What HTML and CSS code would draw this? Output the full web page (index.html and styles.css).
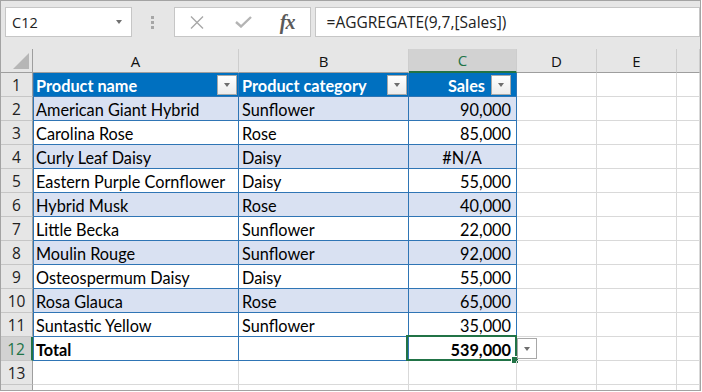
FILE: index.html
```html
<!DOCTYPE html>
<html>
<head>
    <title>AGGREGATE</title>
    <link rel="stylesheet" href="styles.css">
</head>
<body>
    <div class="window">
        <div class="formula-bar">
            <div class="name-box">
                <span>C12</span>
                <span class="caret"></span>
            </div>
            <div class="grip"><i></i><i></i><i></i></div>
            <div class="fx-buttons">
                <svg class="icon" width="14" height="13" viewBox="0 0 14 13">
                    <path d="M1 0.5 L13 12.5 M13 0.5 L1 12.5" stroke="#a8a8a8" stroke-width="1.4" fill="none"/>
                </svg>
                <svg class="icon" width="17" height="12" viewBox="0 0 17 12">
                    <path d="M1 6 L6 10.5 L16 1" stroke="#b4b4b4" stroke-width="2.4" fill="none"/>
                </svg>
                <span class="fx">fx</span>
            </div>
            <div class="formula-input">=AGGREGATE(9,7,[Sales])</div>
        </div>

        <div class="sheet">
            <!-- column headers -->
            <div class="hd corner"><span class="tri"></span></div>
            <div class="hd">A</div>
            <div class="hd">B</div>
            <div class="hd sel-col">C</div>
            <div class="hd">D</div>
            <div class="hd">E</div>
            <div class="hd"></div>

            <!-- row 1 -->
            <div class="rh">1</div>
            <div class="c t th first"><span>Product name</span><span class="filter"></span></div>
            <div class="c t th"><span>Product category</span><span class="filter"></span></div>
            <div class="c t th num"><span>Sales</span><span class="filter"></span></div>
            <div class="c"></div><div class="c"></div><div class="c"></div>

            <div class="rh">2</div>
            <div class="c t band first">American Giant Hybrid</div>
            <div class="c t band">Sunflower</div>
            <div class="c t band num">90,000</div>
            <div class="c"></div><div class="c"></div><div class="c"></div>

            <div class="rh">3</div>
            <div class="c t first">Carolina Rose</div>
            <div class="c t">Rose</div>
            <div class="c t num">85,000</div>
            <div class="c"></div><div class="c"></div><div class="c"></div>

            <div class="rh">4</div>
            <div class="c t band first">Curly Leaf Daisy</div>
            <div class="c t band">Daisy</div>
            <div class="c t band center">#N/A</div>
            <div class="c"></div><div class="c"></div><div class="c"></div>

            <div class="rh">5</div>
            <div class="c t first">Eastern Purple Cornflower</div>
            <div class="c t">Daisy</div>
            <div class="c t num">55,000</div>
            <div class="c"></div><div class="c"></div><div class="c"></div>

            <div class="rh">6</div>
            <div class="c t band first">Hybrid Musk</div>
            <div class="c t band">Rose</div>
            <div class="c t band num">40,000</div>
            <div class="c"></div><div class="c"></div><div class="c"></div>

            <div class="rh">7</div>
            <div class="c t first">Little Becka</div>
            <div class="c t">Sunflower</div>
            <div class="c t num">22,000</div>
            <div class="c"></div><div class="c"></div><div class="c"></div>

            <div class="rh">8</div>
            <div class="c t band first">Moulin Rouge</div>
            <div class="c t band">Sunflower</div>
            <div class="c t band num">92,000</div>
            <div class="c"></div><div class="c"></div><div class="c"></div>

            <div class="rh">9</div>
            <div class="c t first">Osteospermum Daisy</div>
            <div class="c t">Daisy</div>
            <div class="c t num">55,000</div>
            <div class="c"></div><div class="c"></div><div class="c"></div>

            <div class="rh">10</div>
            <div class="c t band first">Rosa Glauca</div>
            <div class="c t band">Rose</div>
            <div class="c t band num">65,000</div>
            <div class="c"></div><div class="c"></div><div class="c"></div>

            <div class="rh">11</div>
            <div class="c t first">Suntastic Yellow</div>
            <div class="c t">Sunflower</div>
            <div class="c t num">35,000</div>
            <div class="c"></div><div class="c"></div><div class="c"></div>

            <div class="rh sel-row">12</div>
            <div class="c t first bold">Total</div>
            <div class="c t"></div>
            <div class="c t num bold active">539,000<span class="handle"></span><span class="cell-drop"></span></div>
            <div class="c"></div><div class="c"></div><div class="c"></div>

            <div class="rh">13</div>
            <div class="c"></div><div class="c"></div><div class="c"></div>
            <div class="c"></div><div class="c"></div><div class="c"></div>

            <div class="rh"></div>
            <div class="c"></div><div class="c"></div><div class="c"></div>
            <div class="c"></div><div class="c"></div><div class="c"></div>
        </div>
    </div>
</body>
</html>
```

FILE: styles.css
```css
body {
    margin: 0;
    background: #ffffff;
    font-family: 'Open Sans', sans-serif;
}

.window {
    width: 701px;
    height: 391px;
    box-sizing: border-box;
    border: 1px solid #a3a3a3;
    overflow: hidden;
    background: #ffffff;
}

/* formula bar */
.formula-bar {
    height: 48px;
    background: #e6e6e6;
    display: flex;
    align-items: flex-start;
    padding: 6px 0 0 4px;
    box-sizing: border-box;
}

.name-box {
    width: 127px;
    height: 30px;
    box-sizing: border-box;
    background: #ffffff;
    border: 1px solid #c6c6c6;
    display: flex;
    align-items: center;
    justify-content: space-between;
    padding: 0 9px 0 6px;
    font-size: 14.5px;
    color: #222;
}

.caret {
    width: 0;
    height: 0;
    border-left: 3.5px solid transparent;
    border-right: 3.5px solid transparent;
    border-top: 4px solid #707070;
}

.grip {
    width: 42px;
    height: 30px;
    display: flex;
    flex-direction: column;
    align-items: center;
    justify-content: center;
    gap: 2px;
}

.grip i {
    width: 3px;
    height: 3px;
    background: #a6a6a6;
}

.fx-buttons {
    width: 137px;
    height: 30px;
    box-sizing: border-box;
    background: #ffffff;
    border: 1px solid #c6c6c6;
    display: flex;
    align-items: center;
    padding: 0 0 0 15px;
}

.fx-buttons .icon:first-child {
    margin-right: 31px;
}

.fx {
    margin-left: 28px;
    font-family: 'Liberation Serif', serif;
    font-style: italic;
    font-weight: bold;
    font-size: 20px;
    color: #5a5a5a;
    letter-spacing: -1px;
}

.formula-input {
    margin-left: 4px;
    width: 386px;
    height: 30px;
    box-sizing: border-box;
    background: #ffffff;
    border: 1px solid #c6c6c6;
    padding: 3px 0 0 11px;
    font-size: 15.5px;
    color: #222;
}

/* sheet grid */
.sheet {
    display: grid;
    grid-template-columns: 32px 206px 170px 108px 80px 80px 1fr;
    grid-auto-rows: 24px;
}

.hd {
    background: #e6e6e6;
    border-right: 1px solid #cdcdcd;
    border-bottom: 1px solid #9e9e9e;
    display: flex;
    align-items: center;
    justify-content: center;
    font-size: 15px;
    color: #111;
}

.corner {
    border-right-color: #9e9e9e;
    justify-content: flex-end;
    align-items: flex-end;
    padding: 0 3px 3px 0;
}

.tri {
    width: 16px;
    height: 16px;
    background: #b6b6b6;
    clip-path: polygon(100% 0, 100% 100%, 0 100%);
}

.sel-col {
    background: #d2d2d2;
    color: #217346;
    border-bottom: 2px solid #217346;
}

.rh {
    background: #e6e6e6;
    border-right: 1px solid #9e9e9e;
    border-bottom: 1px solid #c6c6c6;
    display: flex;
    align-items: center;
    justify-content: center;
    font-family: 'Open Sans', sans-serif;
    font-size: 15.5px;
    color: #222;
}

.sel-row {
    background: #d2d2d2;
    color: #217346;
    border-right: 2px solid #217346;
}

.c {
    border-right: 1px solid #d9d9d9;
    border-bottom: 1px solid #d9d9d9;
    font-family: 'Lato', sans-serif;
    font-size: 16.3px;
    color: #000;
    display: flex;
    align-items: center;
    padding: 1px 4px 0 3px;
    white-space: nowrap;
    position: relative;
}

.t {
    border-right-color: #2f75b5;
    border-bottom-color: #2f75b5;
}

.first {
    border-left: 1px solid #2f75b5;
    padding-left: 2px;
}

.band {
    background: #d9e1f2;
}

.th {
    background: #0070c0;
    color: #ffffff;
    font-weight: bold;
    justify-content: space-between;
    padding-right: 1px;
}

.th.num {
    justify-content: flex-end;
    gap: 6px;
}

.num {
    justify-content: flex-end;
    padding-right: 5px;
}

.center {
    justify-content: center;
}

.bold {
    font-weight: bold;
}

.filter {
    width: 20px;
    height: 20px;
    box-sizing: border-box;
    border: 1px solid #a8a8a8;
    background: linear-gradient(#ffffff, #ececec);
    display: flex;
    align-items: center;
    justify-content: center;
}

.filter::after,
.cell-drop::after {
    content: "";
    border-left: 3.5px solid transparent;
    border-right: 3.5px solid transparent;
    border-top: 4px solid #6e6e6e;
}

/* active cell */
.active::before {
    content: "";
    position: absolute;
    left: -3px;
    top: -2px;
    right: -1px;
    bottom: -1px;
    border: 2px solid #217346;
}

.handle {
    position: absolute;
    right: -3px;
    bottom: -4px;
    width: 6px;
    height: 6px;
    background: #217346;
    border: 1px solid #ffffff;
}

.cell-drop {
    position: absolute;
    left: 100%;
    top: 1px;
    margin-left: 1px;
    width: 20px;
    height: 21px;
    box-sizing: border-box;
    background: #ffffff;
    border: 1px solid #a8a8a8;
    display: flex;
    align-items: center;
    justify-content: center;
    z-index: 2;
}
```
